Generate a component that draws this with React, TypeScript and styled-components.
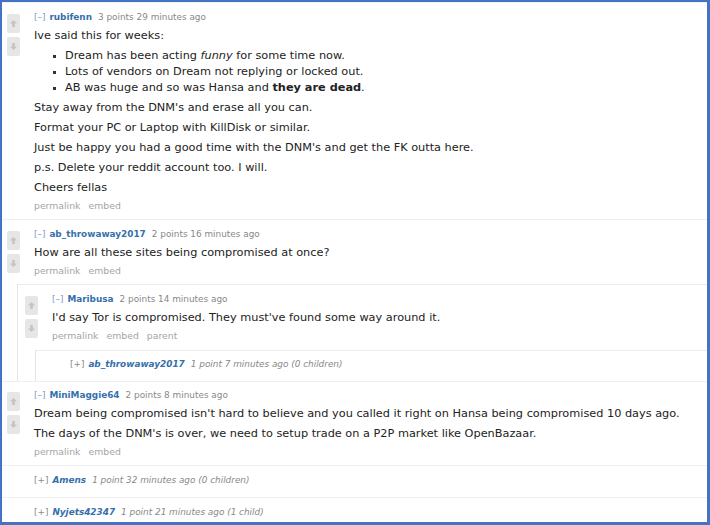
import React from 'react';
import styled, { createGlobalStyle } from 'styled-components';

const Global = createGlobalStyle`
  html, body { margin: 0; padding: 0; background: #fff; }
  body { font-family: "DejaVu Sans", Verdana, sans-serif; color: #222; }
`;

const Frame = styled.div`
  width: 710px;
  height: 525px;
  box-sizing: border-box;
  border-style: solid;
  border-color: #4472c4;
  border-width: 2px 3px 3px 2px;
  overflow: hidden;
  background: #fff;
`;

const Table = styled.div`
  border-top: 1px solid #f0f0f0;
`;

const CommentBox = styled.div<{ $sep?: boolean; $pt: number; $pb: number }>`
  border-top: ${(p) => (p.$sep ? '1px solid #efefef' : 'none')};
  padding-top: ${(p) => p.$pt}px;
  padding-bottom: ${(p) => p.$pb}px;
`;

const Entry = styled.div<{ $indent: number }>`
  display: grid;
  grid-template-columns: 13px 1fr;
  column-gap: 14px;
  padding-left: ${(p) => p.$indent}px;
`;

const Arrows = styled.div`
  display: flex;
  flex-direction: column;
  gap: 4px;
  padding-top: 4px;
`;

const ArrowBox = styled.div`
  width: 13px;
  height: 19px;
  background: #e6e6e6;
  border-radius: 2px;
  display: flex;
  align-items: center;
  justify-content: center;
`;

const Body = styled.div`
  min-width: 0;
`;

const Tagline = styled.div<{ $collapsed?: boolean }>`
  font-size: 8.9px;
  line-height: 14px;
  color: #888;
  white-space: nowrap;
  font-style: ${(p) => (p.$collapsed ? 'italic' : 'normal')};
`;

const Expand = styled.span<{ $collapsed?: boolean }>`
  color: ${(p) => (p.$collapsed ? '#8a8a8a' : '#7f9cc0')};
  font-style: normal;
  margin-right: 4px;
`;

const Author = styled.span`
  color: #3670ab;
  font-weight: bold;
  margin-right: 6px;
`;

const Md = styled.div`
  font-size: 11.3px;
  color: #222;
  margin-top: 2px;
  p {
    margin: 0;
    line-height: 20px;
  }
  ul {
    margin: 2px 0 2px;
    padding-left: 31px;
    list-style: square;
  }
  li {
    line-height: 16px;
  }
  li::marker {
    font-size: 9px;
    color: #333;
  }
`;

const Buttons = styled.div`
  display: flex;
  gap: 8px;
  margin-top: 1px;
  font-size: 9.3px;
  line-height: 14px;
  color: #a4a4a4;
`;

const ChildList = styled.div<{ $ml: number; $mt: number }>`
  margin-left: ${(p) => p.$ml}px;
  margin-top: ${(p) => p.$mt}px;
  border-left: 1px solid #e4e4e4;
  border-top: 1px solid #ececec;
`;

const Arrow = ({ down }: { down?: boolean }) => (
  <svg width="7" height="7" viewBox="0 0 8 8" style={down ? { transform: 'rotate(180deg)' } : undefined}>
    <path d="M4 0 L8 4 H5.5 V8 H2.5 V4 H0 Z" fill="#c4c4c4" />
  </svg>
);

const Votes = () => (
  <Arrows>
    <ArrowBox>
      <Arrow />
    </ArrowBox>
    <ArrowBox>
      <Arrow down />
    </ArrowBox>
  </Arrows>
);

type ExpandedProps = {
  author: string;
  meta: string;
  indent: number;
  sep?: boolean;
  pt: number;
  pb: number;
  buttons: string[];
  children: React.ReactNode;
  replies?: React.ReactNode;
};

const Comment = ({ author, meta, indent, sep, pt, pb, buttons, children, replies }: ExpandedProps) => (
  <CommentBox $sep={sep} $pt={pt} $pb={pb}>
    <Entry $indent={indent}>
      <Votes />
      <Body>
        <Tagline>
          <Expand>[–]</Expand>
          <Author>{author}</Author>
          {meta}
        </Tagline>
        <Md>{children}</Md>
        <Buttons>
          {buttons.map((b) => (
            <span key={b}>{b}</span>
          ))}
        </Buttons>
      </Body>
    </Entry>
    {replies}
  </CommentBox>
);

type CollapsedProps = {
  author: string;
  meta: string;
  indent: number;
  sep?: boolean;
  pt: number;
  pb: number;
};

const Collapsed = ({ author, meta, indent, sep, pt, pb }: CollapsedProps) => (
  <CommentBox $sep={sep} $pt={pt} $pb={pb}>
    <Entry $indent={indent}>
      <div />
      <Tagline $collapsed>
        <Expand $collapsed>[+]</Expand>
        <Author>{author}</Author>
        {meta}
      </Tagline>
    </Entry>
  </CommentBox>
);

export default function App() {
  return (
    <>
      <Global />
      <Frame>
        <Table>
          <Comment
            author="rubifenn"
            meta="3 points 29 minutes ago"
            indent={5}
            pt={7}
            pb={6}
            buttons={['permalink', 'embed']}
          >
            <p>Ive said this for weeks:</p>
            <ul>
              <li>
                Dream has been acting <em>funny</em> for some time now.
              </li>
              <li>Lots of vendors on Dream not replying or locked out.</li>
              <li>
                AB was huge and so was Hansa and <strong>they are dead</strong>.
              </li>
            </ul>
            <p>Stay away from the DNM's and erase all you can.</p>
            <p>Format your PC or Laptop with KillDisk or similar.</p>
            <p>Just be happy you had a good time with the DNM's and get the FK outta here.</p>
            <p>p.s. Delete your reddit account too. I will.</p>
            <p>Cheers fellas</p>
          </Comment>

          <Comment
            author="ab_throwaway2017"
            meta="2 points 16 minutes ago"
            indent={5}
            sep
            pt={7}
            pb={0}
            buttons={['permalink', 'embed']}
            replies={
              <ChildList $ml={15} $mt={6}>
                <Comment
                  author="Maribusa"
                  meta="2 points 14 minutes ago"
                  indent={7}
                  pt={7}
                  pb={0}
                  buttons={['permalink', 'embed', 'parent']}
                  replies={
                    <ChildList $ml={17} $mt={7}>
                      <Collapsed
                        author="ab_throwaway2017"
                        meta="1 point 7 minutes ago (0 children)"
                        indent={7}
                        pt={6}
                        pb={10}
                      />
                    </ChildList>
                  }
                >
                  <p>I'd say Tor is compromised. They must've found some way around it.</p>
                </Comment>
              </ChildList>
            }
          >
            <p>How are all these sites being compromised at once?</p>
          </Comment>

          <Comment
            author="MiniMaggie64"
            meta="2 points 8 minutes ago"
            indent={5}
            sep
            pt={6}
            pb={6}
            buttons={['permalink', 'embed']}
          >
            <p>
              Dream being compromised isn't hard to believe and you called it right on Hansa being compromised 10 days
              ago.
            </p>
            <p>The days of the DNM's is over, we need to setup trade on a P2P market like OpenBazaar.</p>
          </Comment>

          <Collapsed author="Amens" meta="1 point 32 minutes ago (0 children)" indent={5} sep pt={7} pb={10} />
          <Collapsed author="Nyjets42347" meta="1 point 21 minutes ago (1 child)" indent={5} sep pt={7} pb={9} />
        </Table>
      </Frame>
    </>
  );
}
